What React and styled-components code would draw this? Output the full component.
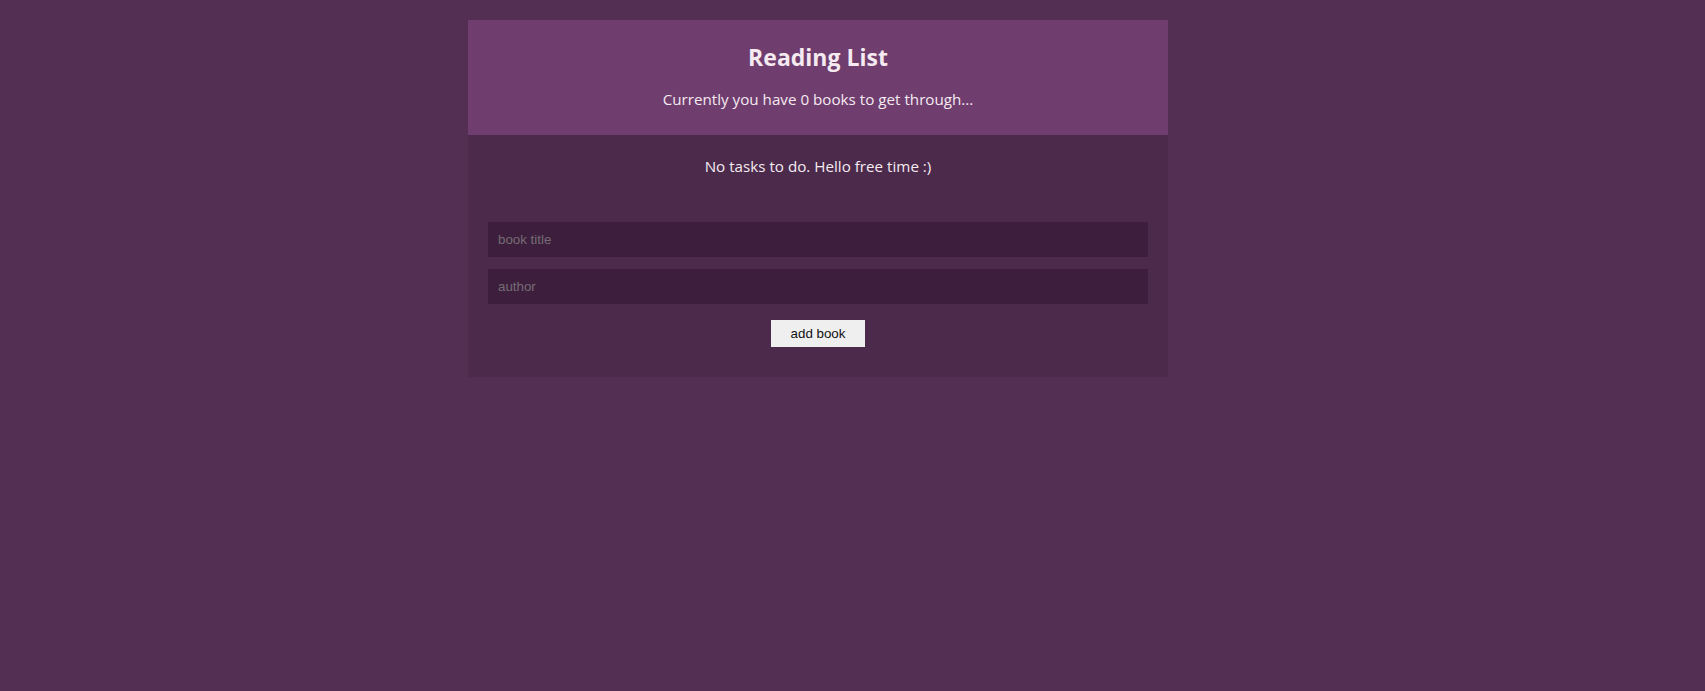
import React, { useState } from "react";
import styled, { createGlobalStyle } from "styled-components";

const GlobalStyle = createGlobalStyle`
  html, body {
    margin: 0;
    padding: 0;
    background-color: #532f53;
  }
  body {
    font-family: "Open Sans", "Noto Sans", sans-serif;
  }
`;

const Page = styled.div`
  min-height: 100vh;
  padding-top: 20px;
  box-sizing: border-box;
  background-color: #532f53;
`;

const Panel = styled.div`
  width: 700px;
  margin-left: 468px;
`;

const Header = styled.header`
  background-color: #6f3d6e;
  color: #f4eaf0;
  text-align: center;
  padding: 21px 20px 25px;
`;

const Title = styled.h1`
  margin: 0;
  font-size: 23px;
  line-height: 32px;
  font-weight: 700;
`;

const Subtitle = styled.p`
  margin: 15px 0 0;
  font-size: 15.2px;
  line-height: 22px;
`;

const Body = styled.div`
  background-color: #4c2a4b;
  padding: 20px 20px 30px;
  display: flex;
  flex-direction: column;
  align-items: center;
`;

const Empty = styled.p`
  margin: 0 0 45px;
  color: #f4eaf0;
  font-size: 15.2px;
  line-height: 22px;
`;

const Form = styled.form`
  width: 100%;
  display: flex;
  flex-direction: column;
  align-items: center;
  gap: 12px;
`;

const Input = styled.input`
  width: 100%;
  height: 35px;
  box-sizing: border-box;
  border: none;
  outline: none;
  padding: 0 10px;
  background-color: #3d1f3d;
  color: #eee;
  font-family: "Liberation Sans", Arial, sans-serif;
  font-size: 13.33px;
  &::placeholder {
    color: #756b74;
  }
`;

const Button = styled.button`
  margin-top: 4px;
  width: 94px;
  height: 27px;
  border: none;
  background-color: #efefef;
  color: #111;
  font-family: "Liberation Sans", Arial, sans-serif;
  font-size: 13.33px;
  cursor: pointer;
`;

export default function App() {
  const [books] = useState([]);
  const [title, setTitle] = useState("");
  const [author, setAuthor] = useState("");

  return (
    <Page>
      <GlobalStyle />
      <Panel>
        <Header>
          <Title>Reading List</Title>
          <Subtitle>Currently you have {books.length} books to get through...</Subtitle>
        </Header>
        <Body>
          <Empty>No tasks to do. Hello free time :)</Empty>
          <Form onSubmit={(e) => e.preventDefault()}>
            <Input placeholder="book title" value={title} onChange={(e) => setTitle(e.target.value)} />
            <Input placeholder="author" value={author} onChange={(e) => setAuthor(e.target.value)} />
            <Button type="submit">add book</Button>
          </Form>
        </Body>
      </Panel>
    </Page>
  );
}
